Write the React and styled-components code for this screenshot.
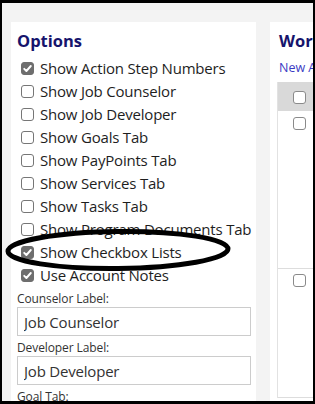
import React from "react";
import styled, { createGlobalStyle } from "styled-components";

//Page reset
const GlobalStyle = createGlobalStyle`
  html, body {
    margin: 0;
    padding: 0;
    background: #000000;
  }
  body {
    font-family: "Open Sans", "Noto Sans", sans-serif;
    color: #222222;
  }
`;

const options = [
  { label: "Show Action Step Numbers", checked: true },
  { label: "Show Job Counselor", checked: false },
  { label: "Show Job Developer", checked: false },
  { label: "Show Goals Tab", checked: false },
  { label: "Show PayPoints Tab", checked: false },
  { label: "Show Services Tab", checked: false },
  { label: "Show Tasks Tab", checked: false },
  { label: "Show Program Documents Tab", checked: false },
  { label: "Show Checkbox Lists", checked: true },
  { label: "Use Account Notes", checked: true },
];

const fields = [
  { label: "Counselor Label:", value: "Job Counselor" },
  { label: "Developer Label:", value: "Job Developer" },
  { label: "Goal Tab:", value: "Goals" },
];

//Small square checkbox, grey when ticked
function Check({ checked, light }) {
  return (
    <Box $checked={checked} $light={light}>
      {checked && (
        <svg width="11" height="11" viewBox="0 0 11 11">
          <path
            d="M2.2 5.8 L4.4 8 L8.8 3"
            fill="none"
            stroke="#ffffff"
            strokeWidth="1.9"
            strokeLinecap="round"
            strokeLinejoin="round"
          />
        </svg>
      )}
    </Box>
  );
}

export default function App() {
  return (
    <>
      <GlobalStyle />
      <Frame>
        <OptionsPanel>
          <Title>Options</Title>
          <CheckList>
            {options.map((o) => (
              <CheckRow key={o.label}>
                <Check checked={o.checked} />
                <span>{o.label}</span>
              </CheckRow>
            ))}
          </CheckList>
          {fields.map((f) => (
            <Field key={f.label}>
              <FieldLabel>{f.label}</FieldLabel>
              <TextInput defaultValue={f.value} readOnly />
            </Field>
          ))}
        </OptionsPanel>

        <WorkPanel>
          <Title $indent>Work Steps</Title>
          <NewLink href="#">New Action Step</NewLink>
          <Table>
            <HeaderRow>
              <Cell $top={9}>
                <Check light />
              </Cell>
            </HeaderRow>
            <BodyRow $height={157}>
              <Cell $top={6}>
                <Check light />
              </Cell>
            </BodyRow>
            <BodyRow $height={130} $last>
              <Cell $top={5}>
                <Check light />
              </Cell>
            </BodyRow>
          </Table>
        </WorkPanel>

        <Circled width="240" height="52" viewBox="0 0 240 52">
          <ellipse
            cx="118"
            cy="25"
            rx="110"
            ry="18.5"
            fill="none"
            stroke="#000000"
            strokeWidth="5"
            transform="rotate(-0.6 118 25)"
          />
        </Circled>
      </Frame>
    </>
  );
}

//CSS
const Frame = styled.div`
  position: relative;
  box-sizing: border-box;
  width: 315px;
  height: 404px;
  border-style: solid;
  border-color: #000000;
  border-width: 3px 2px 3px 2px;
  background: #f3f3f3;
  padding: 19px 0 0 9px;
  display: flex;
  gap: 14px;
  overflow: hidden;
`;

const OptionsPanel = styled.div`
  flex: 0 0 245px;
  width: 245px;
  min-width: 0;
  box-sizing: border-box;
  background: #ffffff;
  padding: 8px 5px 0 6px;
  overflow: hidden;
`;

const WorkPanel = styled.div`
  flex: 1;
  min-width: 0;
  background: #ffffff;
  padding: 8px 0 0 7px;
  overflow: hidden;
  white-space: nowrap;
`;

const Title = styled.h2`
  margin: 0 0 5px ${(p) => (p.$indent ? "2px" : "0")};
  font-size: 16.5px;
  line-height: 22px;
  font-weight: 700;
  color: #16146c;
`;

const NewLink = styled.a`
  display: block;
  margin: 7px 0 0 2px;
  font-size: 12.5px;
  line-height: 17px;
  color: #3b3bc4;
  text-decoration: none;
`;

const CheckList = styled.div`
  display: flex;
  flex-direction: column;
  margin-bottom: 3px;
`;

const CheckRow = styled.label`
  display: flex;
  align-items: center;
  gap: 6px;
  height: 23px;
  padding-left: 4px;
  font-size: 15px;
  line-height: 23px;
  letter-spacing: -0.2px;
  color: #1e1e1e;
  white-space: nowrap;
`;

const Box = styled.span`
  box-sizing: border-box;
  flex: 0 0 13px;
  width: 13px;
  height: 13px;
  border-radius: 3px;
  border: 1px solid ${(p) => (p.$checked ? "#6e6e6e" : p.$light ? "#8a8a8a" : "#767676")};
  background: ${(p) => (p.$checked ? "#6e6e6e" : "#ffffff")};
  display: flex;
  align-items: center;
  justify-content: center;
`;

const Field = styled.div`
  display: flex;
  flex-direction: column;
  margin-top: 4px;
`;

const FieldLabel = styled.div`
  font-size: 12px;
  line-height: 16px;
  letter-spacing: -0.1px;
  color: #333333;
`;

const TextInput = styled.input`
  box-sizing: border-box;
  width: 234px;
  height: 29px;
  margin: 0;
  padding: 0 6px;
  border: 1px solid #cccccc;
  border-radius: 0;
  font-family: "Open Sans", "Noto Sans", sans-serif;
  font-size: 15px;
  letter-spacing: -0.2px;
  color: #333333;
  background: #ffffff;
  outline: none;
`;

const Table = styled.div`
  width: 400px;
  margin-top: 6px;
  border-left: 1px solid #e2e2e2;
`;

const HeaderRow = styled.div`
  display: flex;
  height: 29px;
  background: #d9d9d9;
`;

const BodyRow = styled.div`
  display: flex;
  box-sizing: border-box;
  height: ${(p) => p.$height}px;
  border-top: ${(p) => (p.$last ? "1px solid #dddddd" : "none")};
  border-bottom: ${(p) => (p.$last ? "1px solid #dddddd" : "none")};
`;

const Cell = styled.div`
  width: 40px;
  padding: ${(p) => p.$top}px 0 0 15px;
`;

const Circled = styled.svg`
  position: absolute;
  left: -2px;
  top: 222px;
  pointer-events: none;
`;
